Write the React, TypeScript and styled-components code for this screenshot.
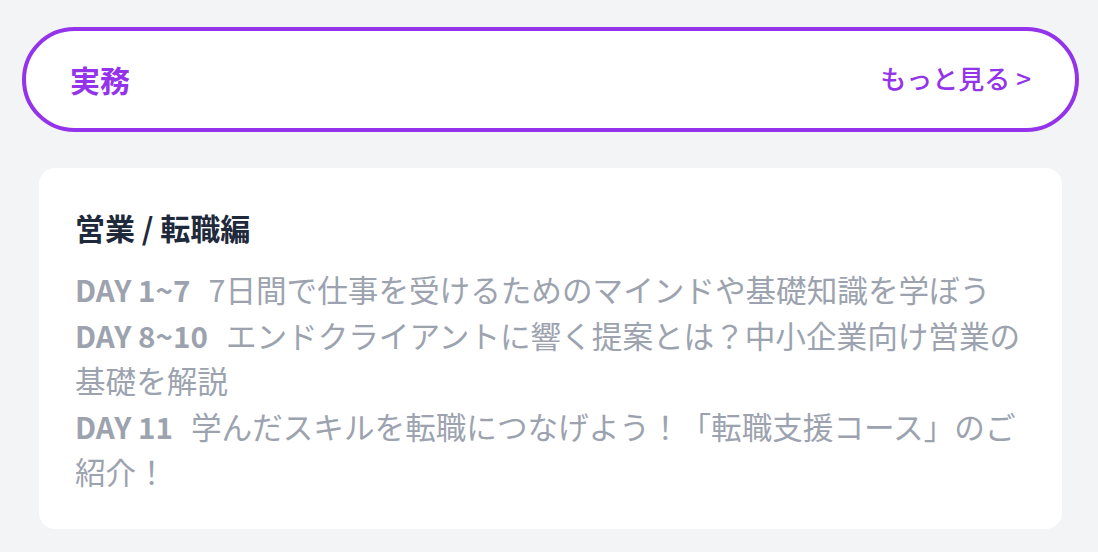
import React from 'react';
import styled, { createGlobalStyle } from 'styled-components';

const GlobalStyle = createGlobalStyle`
  body {
    margin: 0;
    background: #f3f4f6;
    font-family: "Noto Sans CJK JP", "Noto Sans", sans-serif;
  }
`;

interface Lesson {
  day: string;
  text: string;
}

const lessons: Lesson[] = [
  { day: 'DAY 1~7', text: '7日間で仕事を受けるためのマインドや基礎知識を学ぼう' },
  { day: 'DAY 8~10', text: 'エンドクライアントに響く提案とは？中小企業向け営業の基礎を解説' },
  { day: 'DAY 11', text: '学んだスキルを転職につなげよう！「転職支援コース」のご紹介！' },
];

export default function App() {
  return (
    <>
      <GlobalStyle />
      <Page>
        <CategoryBar>
          <CategoryTitle>実務</CategoryTitle>
          <MoreLink href="#">もっと見る &gt;</MoreLink>
        </CategoryBar>
        <CourseCard>
          <CourseTitle>営業 / 転職編</CourseTitle>
          <LessonList>
            {lessons.map((lesson) => (
              <LessonItem key={lesson.day}>
                <DayLabel>{lesson.day}</DayLabel>
                {lesson.text}
              </LessonItem>
            ))}
          </LessonList>
        </CourseCard>
      </Page>
    </>
  );
}

const Page = styled.div`
  padding: 27px 19px 0 22px;
`;

const CategoryBar = styled.div`
  display: flex;
  align-items: center;
  justify-content: space-between;
  box-sizing: border-box;
  height: 105px;
  padding: 0 44px;
  background: #ffffff;
  border: 4px solid #9333ea;
  border-radius: 9999px;
`;

const CategoryTitle = styled.div`
  font-size: 30px;
  font-weight: bold;
  color: #9333ea;
  line-height: 1;
  margin-top: -2px;
`;

const MoreLink = styled.a`
  font-size: 26px;
  font-weight: 500;
  color: #9333ea;
  text-decoration: none;
  line-height: 1;
  margin-top: -4px;
`;

const CourseCard = styled.div`
  margin: 36px 17px 0;
  padding: 37px 30px 34px 36px;
  background: #ffffff;
  border-radius: 16px;
`;

const CourseTitle = styled.div`
  font-size: 30px;
  font-weight: bold;
  line-height: 45px;
  color: #1e293b;
  margin-bottom: 17px;
`;

const LessonList = styled.div`
  display: flex;
  flex-direction: column;
`;

const LessonItem = styled.p`
  margin: 0;
  font-size: 30.6px;
  line-height: 45.5px;
  color: #9ca3af;
`;

const DayLabel = styled.span`
  font-size: 29.6px;
  font-weight: bold;
  margin-right: 18px;
`;
